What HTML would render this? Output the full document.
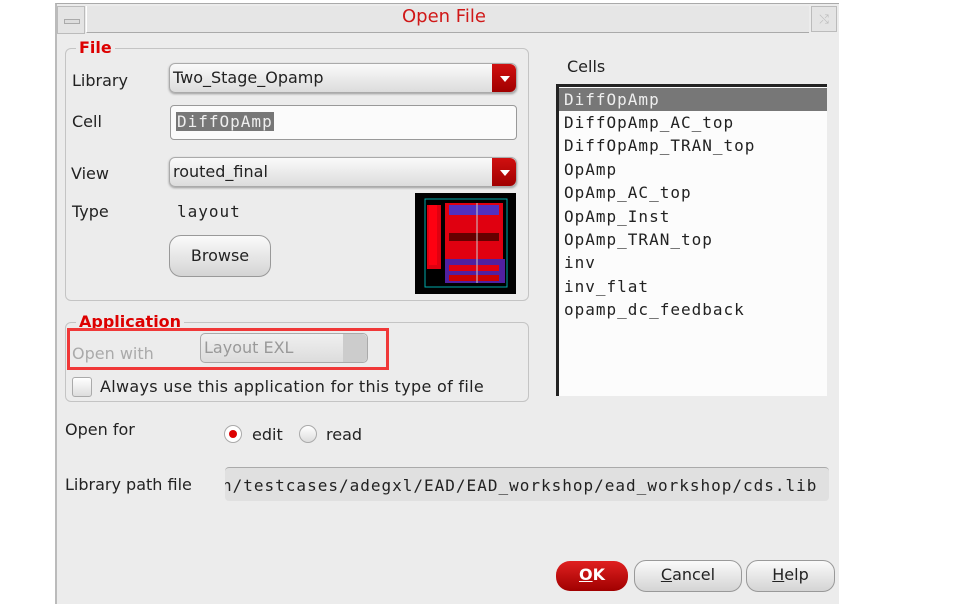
<!DOCTYPE html>
<html><head><style>
body{margin:0;width:963px;height:589px;background:#fff;position:relative;overflow:hidden;font-family:"DejaVu Sans","Liberation Sans",sans-serif;font-size:16px;color:#222}
.a{position:absolute}
.dlg{left:55px;top:3px;width:782px;height:600px;background:#ececec;border-left:2px solid #bbb;border-top:1px solid #aaa}
.mono{font-family:"DejaVu Sans Mono","Liberation Mono",monospace;font-size:16px;letter-spacing:1px}
.combo{background:linear-gradient(#fafafa,#dcdcdc);border:1px solid #aaa;border-radius:6px;box-shadow:0 1px 2px #999}
.arrow{position:absolute;right:0;top:0;bottom:0;width:24px;background:linear-gradient(#d01010,#a00000);border-radius:0 6px 6px 0}
.arrow:after{content:"";position:absolute;left:8px;top:12px;border:5px solid transparent;border-top:6px solid #fff}
.grp{border:1px solid #c4c4c4;border-radius:6px}
.leg{background:#ececec;color:#d00;font-weight:bold;padding:0 3px}
.btn{background:linear-gradient(#fafafa,#d4d4d4);border:1px solid #999;border-radius:12px;text-align:center}
</style></head><body>
<div class="a dlg"></div>
<div class="a" style="left:57px;top:6px;width:26px;height:26px;border:1px solid #bbb;background:#e4e4e4"><div class="a" style="left:6px;top:12px;width:14px;height:3px;border:1px solid #aaa;background:#ddd"></div></div>
<div class="a" style="left:86px;top:6px;width:722px;height:26px;background:#e6e6e6;border-bottom:1px solid #aaa;border-left:1px solid #fff"></div>
<div class="a" style="left:402px;top:6px;color:#d01818;font-size:18px">Open File</div>
<div class="a" style="left:811px;top:6px;width:24px;height:24px;border:1px solid #bbb;background:#e4e4e4;color:#bbb;font-size:12px;text-align:center;line-height:24px">⤭</div>

<div class="a grp" style="left:65px;top:48px;width:462px;height:251px"></div>
<div class="a leg" style="left:76px;top:38px;font-size:16px">File</div>
<div class="a" style="left:72px;top:71px">Library</div>
<div class="a combo" style="left:169px;top:63px;width:346px;height:28px"><span class="a" style="left:3px;top:4px">Two_Stage_Opamp</span><div class="arrow"></div></div>
<div class="a" style="left:72px;top:112px">Cell</div>
<div class="a" style="left:170px;top:105px;width:345px;height:33px;background:#fbfbfb;border:1px solid #999;border-radius:4px"><span class="a mono" style="left:5px;top:6px;background:#777;color:#eee;padding:0 1px">DiffOpAmp</span></div>
<div class="a" style="left:71px;top:164px">View</div>
<div class="a combo" style="left:169px;top:157px;width:346px;height:28px"><span class="a" style="left:3px;top:4px">routed_final</span><div class="arrow"></div></div>
<div class="a" style="left:72px;top:202px">Type</div>
<div class="a mono" style="left:177px;top:202px">layout</div>
<div class="a btn" style="left:169px;top:235px;width:100px;height:40px;line-height:40px;font-size:16px">Browse</div>
<svg class="a" style="left:415px;top:193px" width="101" height="101">
<rect width="101" height="101" fill="#000"/><rect x="10" y="6" width="82" height="88" fill="none" stroke="#0aa"/>
<rect x="12" y="12" width="14" height="64" fill="#e00010"/><rect x="14" y="12" width="8" height="60" fill="#f01"/>
<rect x="30" y="10" width="58" height="56" fill="#e00010"/><rect x="34" y="12" width="50" height="10" fill="#5030c0"/>
<rect x="34" y="40" width="50" height="8" fill="#600"/><rect x="30" y="66" width="60" height="24" fill="#5020a0"/>
<rect x="34" y="72" width="50" height="6" fill="#e00010"/><rect x="34" y="82" width="50" height="6" fill="#c00"/>
<line x1="62" y1="10" x2="62" y2="90" stroke="#ccc"/></svg>

<div class="a grp" style="left:65px;top:322px;width:462px;height:78px"></div>
<div class="a leg" style="left:76px;top:312px;font-size:16px">Application</div>
<div class="a" style="left:67px;top:328px;width:316px;height:36px;border:3px solid #f03838"></div>
<div class="a" style="left:72px;top:344px;color:#aaa">Open with</div>
<div class="a" style="left:200px;top:333px;width:166px;height:28px;border:1px solid #aaa;border-radius:5px;background:linear-gradient(#f0f0f0,#dcdcdc)"><span class="a" style="left:3px;top:4px;color:#999">Layout EXL</span><div class="a" style="right:0;top:0;width:24px;height:28px;background:#ccc;border-radius:0 5px 5px 0"></div></div>
<div class="a" style="left:72px;top:377px;width:18px;height:18px;border:1px solid #aaa;border-radius:3px;background:linear-gradient(#fff,#ddd)"></div>
<div class="a" style="left:100px;top:377px;letter-spacing:0.3px">Always use this application for this type of file</div>

<div class="a" style="left:65px;top:420px">Open for</div>
<div class="a" style="left:224px;top:425px;width:16px;height:16px;border:1px solid #aaa;border-radius:50%;background:#fff"><div class="a" style="left:4px;top:4px;width:8px;height:8px;border-radius:50%;background:#d00"></div></div>
<div class="a" style="left:252px;top:425px">edit</div>
<div class="a" style="left:299px;top:425px;width:16px;height:16px;border:1px solid #aaa;border-radius:50%;background:linear-gradient(#fff,#ddd)"></div>
<div class="a" style="left:326px;top:425px">read</div>
<div class="a" style="left:65px;top:475px">Library path file</div>
<div class="a mono" style="left:225px;top:467px;width:604px;height:33px;background:#e0e0e0;border-top:1px solid #aaa;border-radius:4px;line-height:36px;white-space:nowrap;overflow:hidden;text-indent:-3px">n/testcases/adegxl/EAD/EAD_workshop/ead_workshop/cds.lib</div>

<div class="a" style="left:567px;top:57px">Cells</div>
<div class="a mono" style="left:556px;top:84px;width:268px;height:309px;background:#fcfcfc;border-left:3px solid #222;border-top:3px solid #222;line-height:23.4px">
<div style="background:#777;color:#eee;padding-left:5px;height:23px;margin-top:1px">DiffOpAmp</div>
<div style="padding-left:5px">DiffOpAmp_AC_top<br>DiffOpAmp_TRAN_top<br>OpAmp<br>OpAmp_AC_top<br>OpAmp_Inst<br>OpAmp_TRAN_top<br>inv<br>inv_flat<br>opamp_dc_feedback</div></div>

<div class="a" style="left:556px;top:561px;width:72px;height:30px;border-radius:14px;background:linear-gradient(#e02020,#a00000);color:#fff;font-weight:bold;text-align:center;line-height:28px;font-size:16px"><u>O</u>K</div>
<div class="a btn" style="left:634px;top:560px;width:106px;height:30px;line-height:28px;font-size:16px"><u>C</u>ancel</div>
<div class="a btn" style="left:746px;top:560px;width:87px;height:30px;line-height:28px;font-size:16px"><u>H</u>elp</div>
</body></html>
